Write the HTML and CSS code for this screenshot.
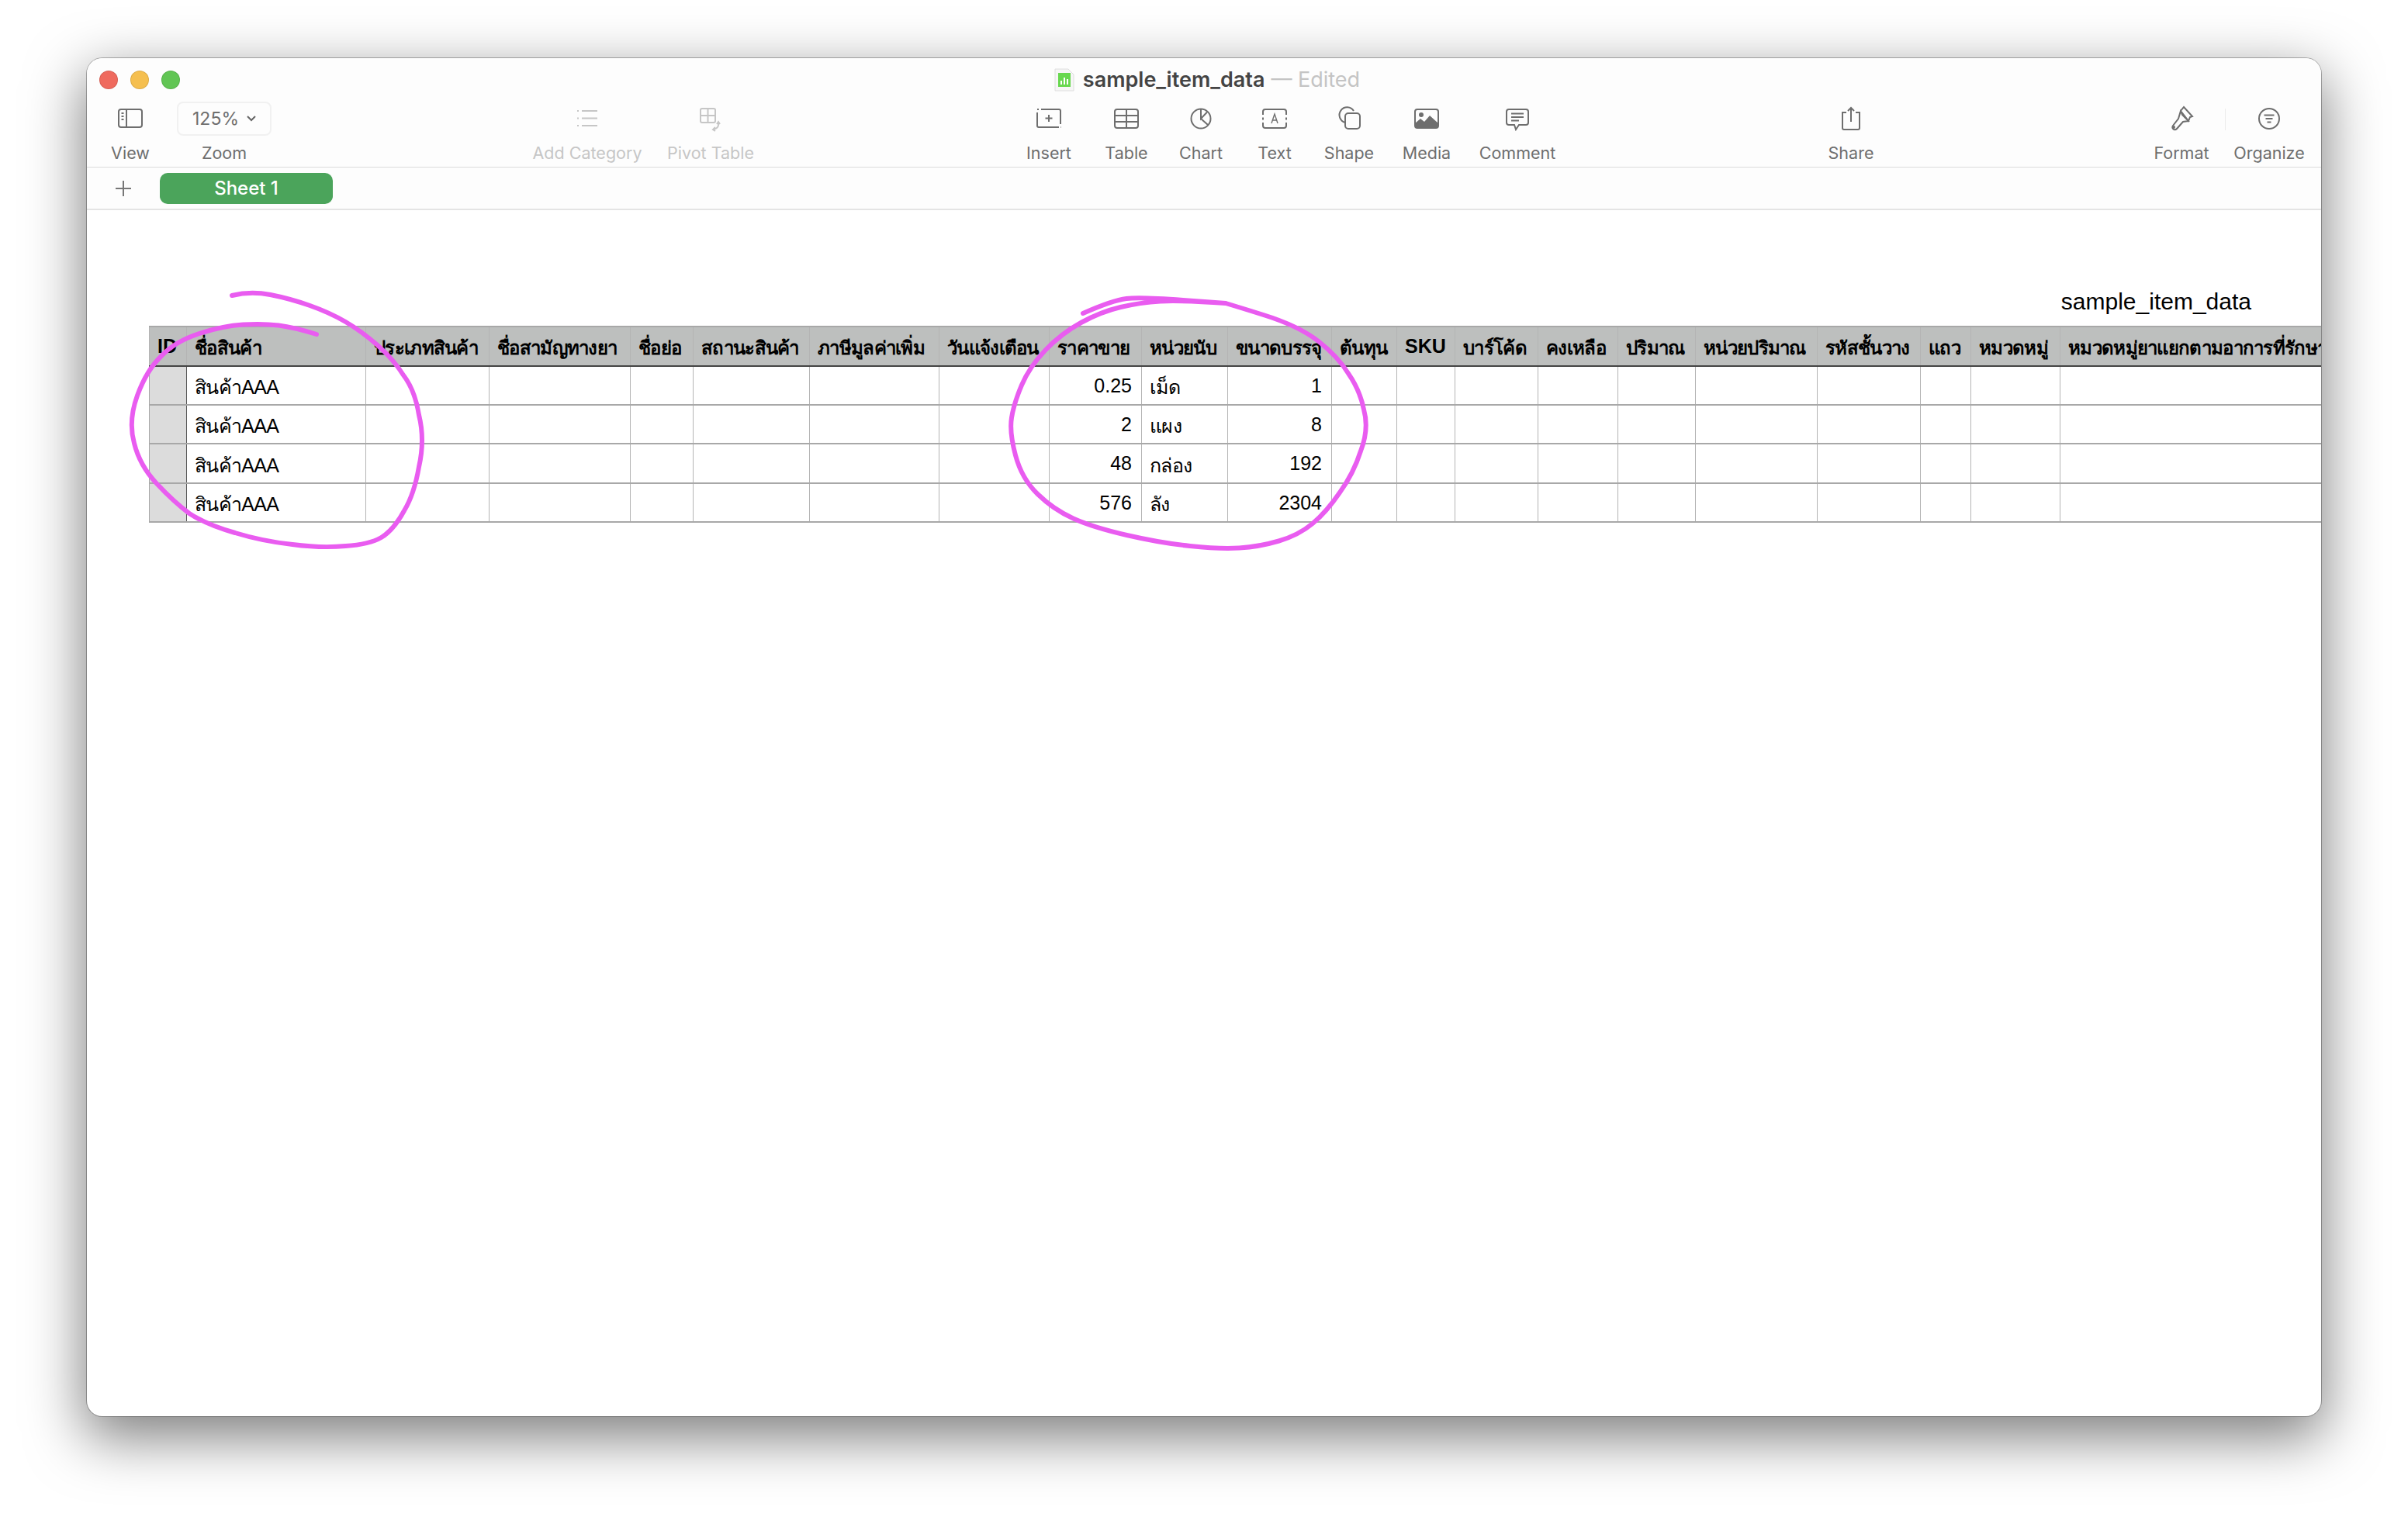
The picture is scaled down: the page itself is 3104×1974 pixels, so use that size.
FILE: index.html
```html
<!DOCTYPE html>
<html lang="th">
<head>
    <meta charset="UTF-8">
    <title>sample_item_data</title>
    <link rel="stylesheet" href="styles.css">
</head>
<body>
    <div class="window">
        <div class="titlebar">
            <div class="lights">
                <span class="light red"></span>
                <span class="light yellow"></span>
                <span class="light green"></span>
            </div>
            <div class="doc-title">
                <svg class="doc-icon" width="26" height="30" viewBox="0 0 26 30">
                    <path d="M1 1h17l7 7v21H1z" fill="#f6f6f6" stroke="#dedede"/>
                    <rect x="5" y="6" width="16" height="18" fill="#68d84f"/>
                    <path d="M9 21v-5M13 21v-9M17 21v-7" stroke="#fff" stroke-width="2"/>
                </svg>
                <span class="doc-name">sample_item_data</span>
                <span class="doc-state">— Edited</span>
            </div>
        </div>

        <div class="toolbar">
            <div class="tool-group group-view">
                <div class="tool">
                    <svg class="icon" viewBox="0 0 44 44"><rect x="7" y="10" width="30" height="23" rx="3"/><path d="M17 10v23M10.500 15h3M10.500 19h3M10.500 23h3"/></svg>
                    <span class="tool-label">View</span>
                </div>
                <div class="tool">
                    <div class="zoom-box">125% <svg class="chevron" width="12" height="8" viewBox="0 0 12 8"><path d="M1 1l5 5 5-5"/></svg></div>
                    <span class="tool-label">Zoom</span>
                </div>
            </div>

            <div class="tool-group group-data">
                <div class="tool disabled">
                    <svg class="icon" viewBox="0 0 44 44"><path d="M15 12h20M15 21.500h20M15 31h20"/><path d="M9 12h2M9 21.500h2M9 31h2"/></svg>
                    <span class="tool-label">Add Category</span>
                </div>
                <div class="tool disabled">
                    <svg class="icon" viewBox="0 0 44 44"><rect x="9" y="9" width="19" height="18" rx="2"/><path d="M18.500 9v18M9 18h19M32 27c1 5-2 8-6 9M30 29l2-3 2 3M28 33l-3 3 3 2"/></svg>
                    <span class="tool-label">Pivot Table</span>
                </div>
            </div>

            <div class="tool-group group-insert">
                <div class="tool">
                    <svg class="icon" viewBox="0 0 44 44"><path d="M7 14v17a2 2 0 0 0 2 2h26M12 10h23a2 2 0 0 1 2 2v17M17.500 21.500h9M22 17v9"/><path d="M7 10h2M37 33h.5"/></svg>
                    <span class="tool-label">Insert</span>
                </div>
                <div class="tool">
                    <svg class="icon" viewBox="0 0 44 44"><rect x="7" y="10" width="30" height="24" rx="3"/><path d="M7 18h30M7 26h30M22 10v24"/></svg>
                    <span class="tool-label">Table</span>
                </div>
                <div class="tool">
                    <svg class="icon" viewBox="0 0 44 44"><circle cx="22" cy="22" r="12.500"/><path d="M22 9.500v12.500l8-8.500M22 22l9 8"/></svg>
                    <span class="tool-label">Chart</span>
                </div>
                <div class="tool">
                    <svg class="icon" viewBox="0 0 44 44"><path d="M7 17v-4a3 3 0 0 1 3-3h24a3 3 0 0 1 3 3v4M7 27v4a3 3 0 0 0 3 3h24a3 3 0 0 0 3-3v-4M7 20.500v3M37 20.500v3"/><path class="thin" d="M18 28l4-12 4 12M19.500 24h5"/></svg>
                    <span class="tool-label">Text</span>
                </div>
                <div class="tool">
                    <svg class="icon" viewBox="0 0 44 44"><path d="M17 27a10 10 0 1 1 11-15"/><rect x="17" y="15" width="19" height="20" rx="4"/></svg>
                    <span class="tool-label">Shape</span>
                </div>
                <div class="tool">
                    <svg class="icon" viewBox="0 0 44 44"><rect x="7" y="10" width="30" height="24" rx="3"/><circle class="solid" cx="15" cy="17" r="3"/><path class="solid" d="M7 34v-6l7-6 5 4 7-8 11 10v6z"/></svg>
                    <span class="tool-label">Media</span>
                </div>
                <div class="tool">
                    <svg class="icon" viewBox="0 0 44 44"><path d="M11 10h22a3 3 0 0 1 3 3v14a3 3 0 0 1-3 3h-9l-4 6-2-6h-7a3 3 0 0 1-3-3v-14a3 3 0 0 1 3-3z"/><path d="M14 15.500h16M14 20h16M14 24.500h10"/></svg>
                    <span class="tool-label">Comment</span>
                </div>
            </div>

            <div class="tool-group group-share">
                <div class="tool">
                    <svg class="icon" viewBox="0 0 44 44"><path d="M16 14h-5v20a2 2 0 0 0 2 2h18a2 2 0 0 0 2-2v-20h-5M22 26v-18M18 12l4-4 4 4"/></svg>
                    <span class="tool-label">Share</span>
                </div>
            </div>

            <div class="tool-group group-side">
                <div class="tool">
                    <svg class="icon" viewBox="0 0 44 44"><path d="M25 7l11 12-3 1-2 5-3-3-5-5-2-5zM21 12l10 13-7 1-8 9a3 3 0 0 1-5-4l7-9z"/><circle cx="12" cy="33" r="1"/></svg>
                    <span class="tool-label">Format</span>
                </div>
                <span class="side-divider"></span>
                <div class="tool">
                    <svg class="icon" viewBox="0 0 44 44"><circle cx="22" cy="22" r="13"/><path d="M15.500 17.500h13M17.500 22h9M19.500 26.500h5"/></svg>
                    <span class="tool-label">Organize</span>
                </div>
            </div>
        </div>

        <div class="sheetbar">
            <span class="add-sheet">
                <svg width="20" height="20" viewBox="0 0 20 20"><path d="M10 0v20M0 10h20"/></svg>
            </span>
            <span class="sheet-tab">Sheet 1</span>
        </div>

        <div class="canvas">
            <div class="table-title">sample_item_data</div>
            <div class="table-clip">
                <table class="data-table">
                    <thead>
                        <tr>
                            <th class="latin">ID</th><th>ชื่อสินค้า</th><th>ประเภทสินค้า</th><th>ชื่อสามัญทางยา</th><th>ชื่อย่อ</th><th>สถานะสินค้า</th><th>ภาษีมูลค่าเพิ่ม</th><th>วันแจ้งเตือน</th><th>ราคาขาย</th><th>หน่วยนับ</th><th>ขนาดบรรจุ</th><th>ต้นทุน</th><th class="latin">SKU</th><th>บาร์โค้ด</th><th>คงเหลือ</th><th>ปริมาณ</th><th>หน่วยปริมาณ</th><th>รหัสชั้นวาง</th><th>แถว</th><th>หมวดหมู่</th><th>หมวดหมู่ยาแยกตามอาการที่รักษา</th>
                        </tr>
                    </thead>
                    <tbody>
                        <tr>
                            <td></td><td>สินค้าAAA</td><td></td><td></td><td></td><td></td><td></td><td></td><td class="num">0.25</td><td>เม็ด</td><td class="num">1</td><td></td><td></td><td></td><td></td><td></td><td></td><td></td><td></td><td></td><td></td>
                        </tr>
                        <tr>
                            <td></td><td>สินค้าAAA</td><td></td><td></td><td></td><td></td><td></td><td></td><td class="num">2</td><td>แผง</td><td class="num">8</td><td></td><td></td><td></td><td></td><td></td><td></td><td></td><td></td><td></td><td></td>
                        </tr>
                        <tr>
                            <td></td><td>สินค้าAAA</td><td></td><td></td><td></td><td></td><td></td><td></td><td class="num">48</td><td>กล่อง</td><td class="num">192</td><td></td><td></td><td></td><td></td><td></td><td></td><td></td><td></td><td></td><td></td>
                        </tr>
                        <tr>
                            <td></td><td>สินค้าAAA</td><td></td><td></td><td></td><td></td><td></td><td></td><td class="num">576</td><td>ลัง</td><td class="num">2304</td><td></td><td></td><td></td><td></td><td></td><td></td><td></td><td></td><td></td><td></td>
                        </tr>
                    </tbody>
                </table>
            </div>
        </div>
    </div>

    <!-- pen marks drawn over the screenshot -->
    <svg class="scribble" viewBox="0 0 3104 1974">
        <path d="M299 381 Q323 375 348.500 380 Q374 385 399.500 394 Q425 403 445.500 415 Q466 427 486.500 445 Q507 463 519.500 483 Q535 503 540 535 Q548 567 540 602 Q534 637 521 658.500 Q507 684 491.500 693 Q476 702 445.500 704 Q415 707 377 702 Q339 698 303 687 Q267 677 244 662 Q224 647 202 623.500 Q180 600 173 571.500 Q165 543 177 510 Q189 477 208.500 458.500 Q226 440 257 430 Q288 420 313.500 418.500 Q339 417 359 419.500 Q379 422 408 431"/>
        <path d="M1396 404 Q1434.500 387 1452 385 Q1470 383 1525 387 L1580 391 Q1521 387 1495.500 388.500 Q1470 390 1444.500 396 Q1419 402 1393.500 416 Q1368 430 1347.500 451.500 Q1327 473 1317 496.500 Q1307 520 1304 538.500 Q1301 557 1309 587 Q1317 617 1337.500 637 Q1358 657 1383.500 668.500 Q1409 680 1452.500 690 Q1496 700 1534 704 Q1572 708 1597.500 706.500 Q1623 705 1648.500 697.500 Q1674 690 1692 675 Q1710 660 1727 635 Q1745 610 1754 581.500 Q1765 553 1758 528 Q1753 503 1738 481.500 Q1725 460 1699.500 440 Q1674 420 1627 405.500 Q1600 397 1580 391"/>
    </svg>
</body>
</html>
```

FILE: styles.css
```css
html, body {
    margin: 0;
    padding: 0;
}
body {
    position: relative;
    width: 3104px;
    height: 1974px;
    padding: 75px 0 0 112px;
    box-sizing: border-box;
    background-color: #fff;
    font-family: Inter, "Liberation Sans", "Noto Sans", sans-serif;
    overflow: hidden;
}

/* window */
.window {
    width: 2880px;
    height: 1751px;
    background-color: #fff;
    border-radius: 20px;
    box-shadow: 0 0 0 1px rgba(0, 0, 0, 0.28), 0 24px 72px 4px rgba(0, 0, 0, 0.5);
    overflow: hidden;
}

/* title bar */
.titlebar {
    height: 56px;
    display: grid;
    grid-template-columns: 1fr auto 1fr;
    align-items: center;
    padding: 0 16px;
    background-color: #fdfdfd;
}
.lights {
    display: flex;
    gap: 16px;
    grid-column: 1;
}
.light {
    width: 24px;
    height: 24px;
    border-radius: 50%;
    box-sizing: border-box;
    border: 1px solid rgba(0, 0, 0, 0.1);
}
.red { background-color: #ef6a5e; }
.yellow { background-color: #f5bf4f; }
.green { background-color: #61c554; }
.doc-title {
    grid-column: 2;
    display: flex;
    align-items: center;
    margin-left: 8px;
    font-size: 27px;
    line-height: 30px;
}
.doc-icon {
    margin-right: 11px;
}
.doc-name {
    font-weight: 600;
    color: #444;
}
.doc-state {
    margin-left: 8px;
    color: #c4c4c4;
}

/* toolbar */
.toolbar {
    height: 84px;
    display: flex;
    align-items: flex-start;
    background-color: #fdfdfd;
    border-bottom: 1px solid #dcdcdc;
}
.tool-group {
    display: grid;
    align-items: start;
}
.group-view {
    margin-left: 16px;
    grid-template-columns: 80px 162px;
}
.group-data {
    margin-left: 312px;
    grid-template-columns: 150px 168px;
}
.group-insert {
    margin-left: 302px;
    grid-template-columns: 100px 100px 92px 98px 94px 106px 128px;
}
.group-share {
    margin-left: 316px;
    grid-template-columns: 100px;
}
.group-side {
    margin: 0 11px 0 auto;
    grid-template-columns: 112px 1px 112px;
}
.tool {
    display: flex;
    flex-direction: column;
    align-items: center;
    color: #6e6e6e;
}
.tool.disabled {
    color: #c6c6c6;
}
.icon {
    width: 44px;
    height: 44px;
    fill: none;
    stroke: currentColor;
    stroke-width: 2;
}
.icon .solid {
    fill: currentColor;
    stroke: none;
}
.icon .thin {
    stroke-width: 1.400;
}
.tool-label {
    margin-top: 9px;
    font-size: 21.500px;
    line-height: 26px;
    white-space: nowrap;
}
.zoom-box {
    width: 122px;
    height: 44px;
    box-sizing: border-box;
    border: 2px solid #f1f1f1;
    border-radius: 8px;
    display: flex;
    align-items: center;
    justify-content: center;
    gap: 10px;
    font-size: 23px;
}
.chevron {
    fill: none;
    stroke: #666;
    stroke-width: 2;
}
.side-divider {
    width: 1px;
    height: 28px;
    margin-top: 9px;
    background-color: #ececec;
}

/* sheet tabs */
.sheetbar {
    height: 53px;
    display: flex;
    align-items: center;
    padding-left: 37px;
    gap: 37px;
    background-color: #fdfdfd;
    border-bottom: 2px solid #e4e4e4;
}
.add-sheet {
    display: flex;
}
.add-sheet svg {
    stroke: #777;
    stroke-width: 2;
}
.sheet-tab {
    width: 223px;
    height: 40px;
    border-radius: 10px;
    background-color: #4ba45b;
    color: #fff;
    font-size: 24px;
    font-weight: 500;
    line-height: 40px;
    text-align: center;
}

/* sheet canvas */
.canvas {
    padding: 0 0 0 80px;
    font-family: "Liberation Sans", "Noto Sans", sans-serif;
    color: #000;
}
.table-title {
    height: 149px;
    padding: 100px 90px 0 0;
    box-sizing: border-box;
    text-align: right;
    font-size: 30px;
    line-height: 36px;
}
.table-clip {
    width: 2800px;
    overflow: hidden;
}
.data-table {
    width: 2963px;
    table-layout: fixed;
    border-collapse: collapse;
    font-size: 25px;
}
.data-table th,
.data-table td {
    box-sizing: border-box;
    padding: 4px 10px 0;
    border: 1px solid #b4b4b4;
    border-top: 2px solid #a8a8a8;
    border-bottom: 2px solid #a8a8a8;
    white-space: nowrap;
    text-align: left;
    letter-spacing: -0.700px;
}
.data-table th {
    height: 51px;
    background-color: #bdbfbe;
    font-size: 24px;
    font-weight: bold;
    border-bottom-color: #444;
}
.data-table .latin {
    padding: 0 10px;
    font-size: 25px;
    letter-spacing: 0;
}
.data-table tbody td {
    height: 50px;
}
.data-table tbody tr:first-child td {
    border-top-color: #444;
}
.data-table tbody tr:nth-child(3) td {
    height: 51px;
}
.data-table td:first-child {
    background-color: #dcdcdc;
    border-left-color: #a8a8a8;
    border-right-color: #555;
}
.data-table .num {
    padding: 0 12px 0 10px;
    letter-spacing: 0;
    text-align: right;
}
.data-table th:nth-child(1) { width: 48px; }
.data-table th:nth-child(2) { width: 231px; }
.data-table th:nth-child(3) { width: 159px; }
.data-table th:nth-child(4) { width: 182px; }
.data-table th:nth-child(5) { width: 81px; }
.data-table th:nth-child(6) { width: 150px; }
.data-table th:nth-child(7) { width: 167px; }
.data-table th:nth-child(8) { width: 142px; }
.data-table th:nth-child(9) { width: 119px; }
.data-table th:nth-child(10) { width: 111px; }
.data-table th:nth-child(11) { width: 134px; }
.data-table th:nth-child(12) { width: 84px; }
.data-table th:nth-child(13) { width: 75px; }
.data-table th:nth-child(14) { width: 107px; }
.data-table th:nth-child(15) { width: 103px; }
.data-table th:nth-child(16) { width: 100px; }
.data-table th:nth-child(17) { width: 157px; }
.data-table th:nth-child(18) { width: 133px; }
.data-table th:nth-child(19) { width: 65px; }
.data-table th:nth-child(20) { width: 115px; }
.data-table th:nth-child(21) { width: 500px; }

/* pen marks */
.scribble {
    position: absolute;
    top: 0;
    left: 0;
    width: 3104px;
    height: 1974px;
    pointer-events: none;
    fill: none;
    stroke: #e95cf0;
    stroke-width: 6;
    stroke-linecap: round;
    stroke-linejoin: round;
}
```
